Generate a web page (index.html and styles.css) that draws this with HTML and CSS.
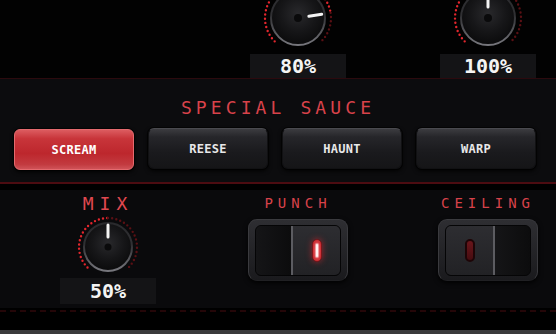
FILE: index.html
```html
<!DOCTYPE html>
<html lang="en">
<head>
    <meta charset="UTF-8">
    <meta name="viewport" content="width=device-width, initial-scale=1.0">
    <title>Special Sauce</title>
    <link rel="stylesheet" href="styles.css">
</head>
<body>
    <section class="knob-row">
        <div class="cell"></div>
        <div class="cell">
            <svg class="knob big" width="72" height="72" viewBox="0 0 72 72">
                <defs>
                    <radialGradient id="face" cx="50%" cy="42%" r="55%">
                        <stop offset="0" stop-color="#29292c"/>
                        <stop offset="0.6" stop-color="#161618"/>
                        <stop offset="1" stop-color="#0c0c0d"/>
                    </radialGradient>
                    <linearGradient id="rim" x1="0" y1="0" x2="0" y2="1">
                        <stop offset="0" stop-color="#2a2a2d"/>
                        <stop offset="0.45" stop-color="#303033"/>
                        <stop offset="1" stop-color="#77777d"/>
                    </linearGradient>
                </defs>
                <path class="dots on" d="M12.67 59.33 A33 33 0 1 1 68.59 30.84"/>
                <path class="dots off" d="M68.59 30.84 A33 33 0 0 1 59.33 59.33"/>
                <circle cx="36" cy="36" r="27" fill="url(#face)" stroke="url(#rim)" stroke-width="2"/>
                <circle cx="36" cy="36" r="4" fill="#0a0a0b"/>
                <line class="pointer" x1="36" y1="25" x2="36" y2="12" transform="rotate(81 36 36)"/>
            </svg>
            <div class="readout">80%</div>
        </div>
        <div class="cell">
            <svg class="knob big" width="72" height="72" viewBox="0 0 72 72">
                <path class="dots on" d="M12.67 59.33 A33 33 0 0 1 36 3"/>
                <path class="dots off" d="M36 3 A33 33 0 0 1 59.33 59.33"/>
                <circle cx="36" cy="36" r="27" fill="url(#face)" stroke="url(#rim)" stroke-width="2"/>
                <circle cx="36" cy="36" r="4" fill="#0a0a0b"/>
                <line class="pointer" x1="36" y1="25" x2="36" y2="12"/>
            </svg>
            <div class="readout">100%</div>
        </div>
    </section>

    <div class="rule-dark"></div>

    <section class="sauce">
        <h2 class="sauce-title">SPECIAL SAUCE</h2>
        <div class="presets">
            <button class="preset active">SCREAM</button>
            <button class="preset">REESE</button>
            <button class="preset">HAUNT</button>
            <button class="preset">WARP</button>
        </div>
    </section>

    <div class="rule-red"></div>

    <section class="panel">
        <div class="cell">
            <div class="label big-label">MIX</div>
            <svg class="knob small" width="64" height="64" viewBox="0 0 64 64">
                <path class="dots on" d="M11.5 52.5 A29 29 0 0 1 32 3"/>
                <path class="dots off" d="M32 3 A29 29 0 0 1 52.5 52.5"/>
                <circle cx="32" cy="32" r="24" fill="url(#face)" stroke="url(#rim)" stroke-width="2"/>
                <circle cx="32" cy="32" r="3.5" fill="#0a0a0b"/>
                <line class="pointer" x1="32" y1="22" x2="32" y2="10"/>
            </svg>
            <div class="readout tall">50%</div>
        </div>
        <div class="cell">
            <div class="label">PUNCH</div>
            <div class="toggle">
                <div class="well">
                    <div class="paddle narrow"></div>
                    <div class="paddle pressed edge-left"><span class="led lit"></span></div>
                </div>
            </div>
        </div>
        <div class="cell">
            <div class="label">CEILING</div>
            <div class="toggle">
                <div class="well">
                    <div class="paddle pressed edge-right"><span class="led"></span></div>
                    <div class="paddle narrow"></div>
                </div>
            </div>
        </div>
    </section>

    <div class="rule-dashed"></div>
    <div class="footer-bar"></div>
</body>
</html>
```

FILE: styles.css
```css
/* Plugin panel */
body {
    margin: 0;
    width: 556px;
    height: 334px;
    overflow: hidden;
    background-color: #000;
    font-family: 'DejaVu Sans Mono', 'Liberation Mono', monospace;
    color: #f2f2f2;
}

.knob-row,
.panel {
    display: grid;
    grid-template-columns: repeat(3, 190px);
    padding-left: 13px;
}

.cell {
    display: flex;
    flex-direction: column;
    align-items: center;
}

.knob-row {
    height: 78px;
    overflow: hidden;
    background-color: #020202;
}

.knob {
    display: block;
}

.knob.big {
    margin-top: -18px;
}

.dots {
    fill: none;
    stroke-width: 2.4;
    stroke-linecap: round;
    stroke-dasharray: 0 4.2;
}

.dots.on {
    stroke: #e2262d;
}

.dots.off {
    stroke: #5a1014;
}

.pointer {
    stroke: #f4f4f4;
    stroke-width: 3;
    stroke-linecap: round;
}

.readout {
    width: 96px;
    height: 24px;
    line-height: 24px;
    background-color: #141416;
    text-align: center;
    font-size: 20px;
    font-weight: bold;
    color: #f4f4f4;
}

.readout.tall {
    height: 26px;
    line-height: 26px;
    margin-top: -1px;
}

.rule-dark {
    height: 1px;
    background-color: #2c0a0e;
}

.sauce {
    height: 103px;
    background-color: #0c0c0e;
    padding-top: 19px;
    box-sizing: border-box;
}

.sauce-title {
    margin: 0 0 10px;
    text-align: center;
    font-size: 18px;
    line-height: 20px;
    font-weight: normal;
    letter-spacing: 4.1px;
    color: #d8424a;
}

.presets {
    display: flex;
    gap: 14px;
    padding-left: 14px;
}

.preset {
    width: 120px;
    height: 41px;
    border: 1px solid #111113;
    border-top-color: #4a4a4f;
    border-radius: 6px;
    background: linear-gradient(#3c3c40 0%, #26262a 20%, #1a1a1d 60%, #151517 100%);
    box-shadow: 0 2px 4px rgba(0, 0, 0, 0.9), 0 0 0 1px #050505;
    color: #e8e8e8;
    font-family: 'DejaVu Sans Mono', monospace;
    font-size: 12px;
    font-weight: bold;
    letter-spacing: 0.3px;
    padding: 0;
}

.preset.active {
    margin-top: 1px;
    border-color: #e56a6e;
    background: linear-gradient(#dc5c60 0%, #c8353a 22%, #bd272d 60%, #c23a3f 88%, #cf5257 100%);
    color: #fff;
}

.rule-red {
    height: 2px;
    background-color: #4c0c11;
}

.panel {
    height: 118px;
    margin-top: 6px;
    padding-top: 4px;
    box-sizing: border-box;
    background-color: #0a0a0c;
}

.label {
    font-size: 14px;
    line-height: 18px;
    letter-spacing: 5px;
    color: #d8424a;
}

.label.big-label {
    font-size: 18px;
    line-height: 20px;
    letter-spacing: 6px;
    color: #e04850;
}

.knob.small {
    margin-top: 1px;
}

.toggle {
    margin-top: 7px;
    width: 100px;
    height: 62px;
    box-sizing: border-box;
    padding: 5px 6px 6px 6px;
    border: 1px solid #3a3a3e;
    border-bottom-color: #202023;
    border-radius: 9px;
    background: linear-gradient(#2e2e32, #1a1a1d);
    box-shadow: 0 2px 5px rgba(0, 0, 0, 0.9);
}

.well {
    display: flex;
    height: 100%;
    border: 1px solid #050506;
    border-radius: 6px;
    overflow: hidden;
    background-color: #0b0b0c;
}

.paddle {
    flex: 1;
    display: flex;
    align-items: center;
    justify-content: center;
}

.paddle.narrow {
    flex: 0 0 35px;
    background: linear-gradient(90deg, #151517, #0c0c0d);
}

.paddle.pressed {
    background: linear-gradient(#2d2d31, #222225);
}

.paddle.edge-left {
    border-left: 2px solid #5c5c61;
}

.paddle.edge-right {
    border-right: 2px solid #5c5c61;
}

.led {
    width: 10px;
    height: 23px;
    box-sizing: border-box;
    border: 2px solid #1e0507;
    border-radius: 6px;
    background: linear-gradient(#6a161b, #470d11);
}

.led.lit {
    position: relative;
    border: 1px solid #7c161b;
    background: radial-gradient(#f0545a, #c0232a);
    box-shadow: 0 0 6px rgba(230, 40, 50, 0.6);
}

.led.lit::after {
    content: '';
    position: absolute;
    left: 3px;
    top: 4px;
    width: 2px;
    height: 13px;
    border-radius: 2px;
    background-color: #fff2f2;
    box-shadow: 0 0 1px 1px #f4a4a8;
}

.rule-dashed {
    margin-top: 2px;
    border-top: 2px dashed #240608;
}

.footer-bar {
    margin-top: 18px;
    height: 4px;
    background-color: #3a3a3c;
}
```
